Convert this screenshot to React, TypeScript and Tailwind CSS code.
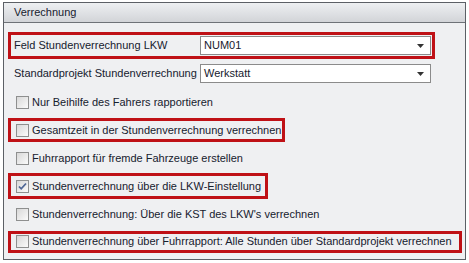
import { ReactNode } from 'react'

function Combo({ value }: { value: string }): ReactNode {
  return (
    <div className="flex h-[19px] w-[231px] items-center justify-between border border-[#8b8b8b] bg-white pl-[3px] pr-[6px]">
      <span>{value}</span>
      <svg width="7" height="4" viewBox="0 0 7 4">
        <path d="M0 0h7L3.5 4z" fill="#333" />
      </svg>
    </div>
  )
}

function Check({ checked }: { checked?: boolean }): ReactNode {
  return (
    <span className="flex size-[13px] shrink-0 items-center justify-center border border-[#8e8f8f] bg-gradient-to-br from-[#d8d8d8] to-[#fbfbfb]">
      {checked && (
        <svg width="9" height="9" viewBox="0 0 9 9">
          <path d="M1 4.5l2.2 2.3L8 1.5" fill="none" stroke="#4f6796" strokeWidth="1.8" />
        </svg>
      )}
    </span>
  )
}

function CheckRow({
  label,
  checked,
  box,
  h = 'h-[28px]'
}: {
  label: string
  checked?: boolean
  box?: string
  h?: string
}): ReactNode {
  const inner = (
    <div className="flex items-center gap-[3px]">
      <Check checked={checked} />
      <span>{label}</span>
    </div>
  )
  return (
    <div className={`flex items-center ${h}`}>
      {box ? (
        <div className={box}>{inner}</div>
      ) : (
        <div className="pl-[8px]">{inner}</div>
      )}
    </div>
  )
}

export default function App(): ReactNode {
  return (
    <div className="h-[263px] w-[469px] bg-white pl-[3px] pt-[2px] font-['Liberation_Sans',sans-serif] text-[11px] text-[#16202e]">
      <div className="flex h-[258px] w-[463px] flex-col border border-[#5c6066] bg-[#eff0f2]">
        <div className="flex h-[20px] shrink-0 items-center border-b border-[#6e7277] bg-gradient-to-b from-[#eef0f2] to-[#d2d4d8] pl-[10px]">
          Verrechnung
        </div>
        <div className="flex flex-col pl-[4px] pt-[9px]">
          <div className="flex h-[27px] w-[427px] items-center justify-between border-[3px] border-[#bf1116] pl-[3px] pr-[1px]">
            <span>Feld Stundenverrechnung LKW</span>
            <Combo value="NUM01" />
          </div>
          <div className="flex h-[29px] w-[427px] items-center justify-between pl-[6px] pr-[4px]">
            <span>Standardprojekt Stundenverrechnung</span>
            <Combo value="Werkstatt" />
          </div>
          <div className="flex flex-col">
            <CheckRow label="Nur Beihilfe des Fahrers rapportieren" />
            <CheckRow
              label="Gesamtzeit in der Stundenverrechnung verrechnen"
              box="flex h-[24px] w-[277px] items-center border-[3px] border-[#bf1116] pl-[5px]"
            />
            <CheckRow label="Fuhrrapport für fremde Fahrzeuge erstellen" />
            <CheckRow
              label="Stundenverrechnung über die LKW-Einstellung"
              checked
              box="flex h-[26px] w-[260px] items-center border-[3px] border-[#bf1116] pl-[5px]"
            />
            <CheckRow label="Stundenverrechnung: Über die KST des LKW's verrechnen" />
            <CheckRow
              label="Stundenverrechnung über Fuhrrapport: Alle Stunden über Standardprojekt verrechnen"
              h="h-[27px]"
              box="flex h-[22px] w-[454px] items-center border-[3px] border-[#bf1116] pl-[5px]"
            />
          </div>
        </div>
      </div>
    </div>
  )
}
